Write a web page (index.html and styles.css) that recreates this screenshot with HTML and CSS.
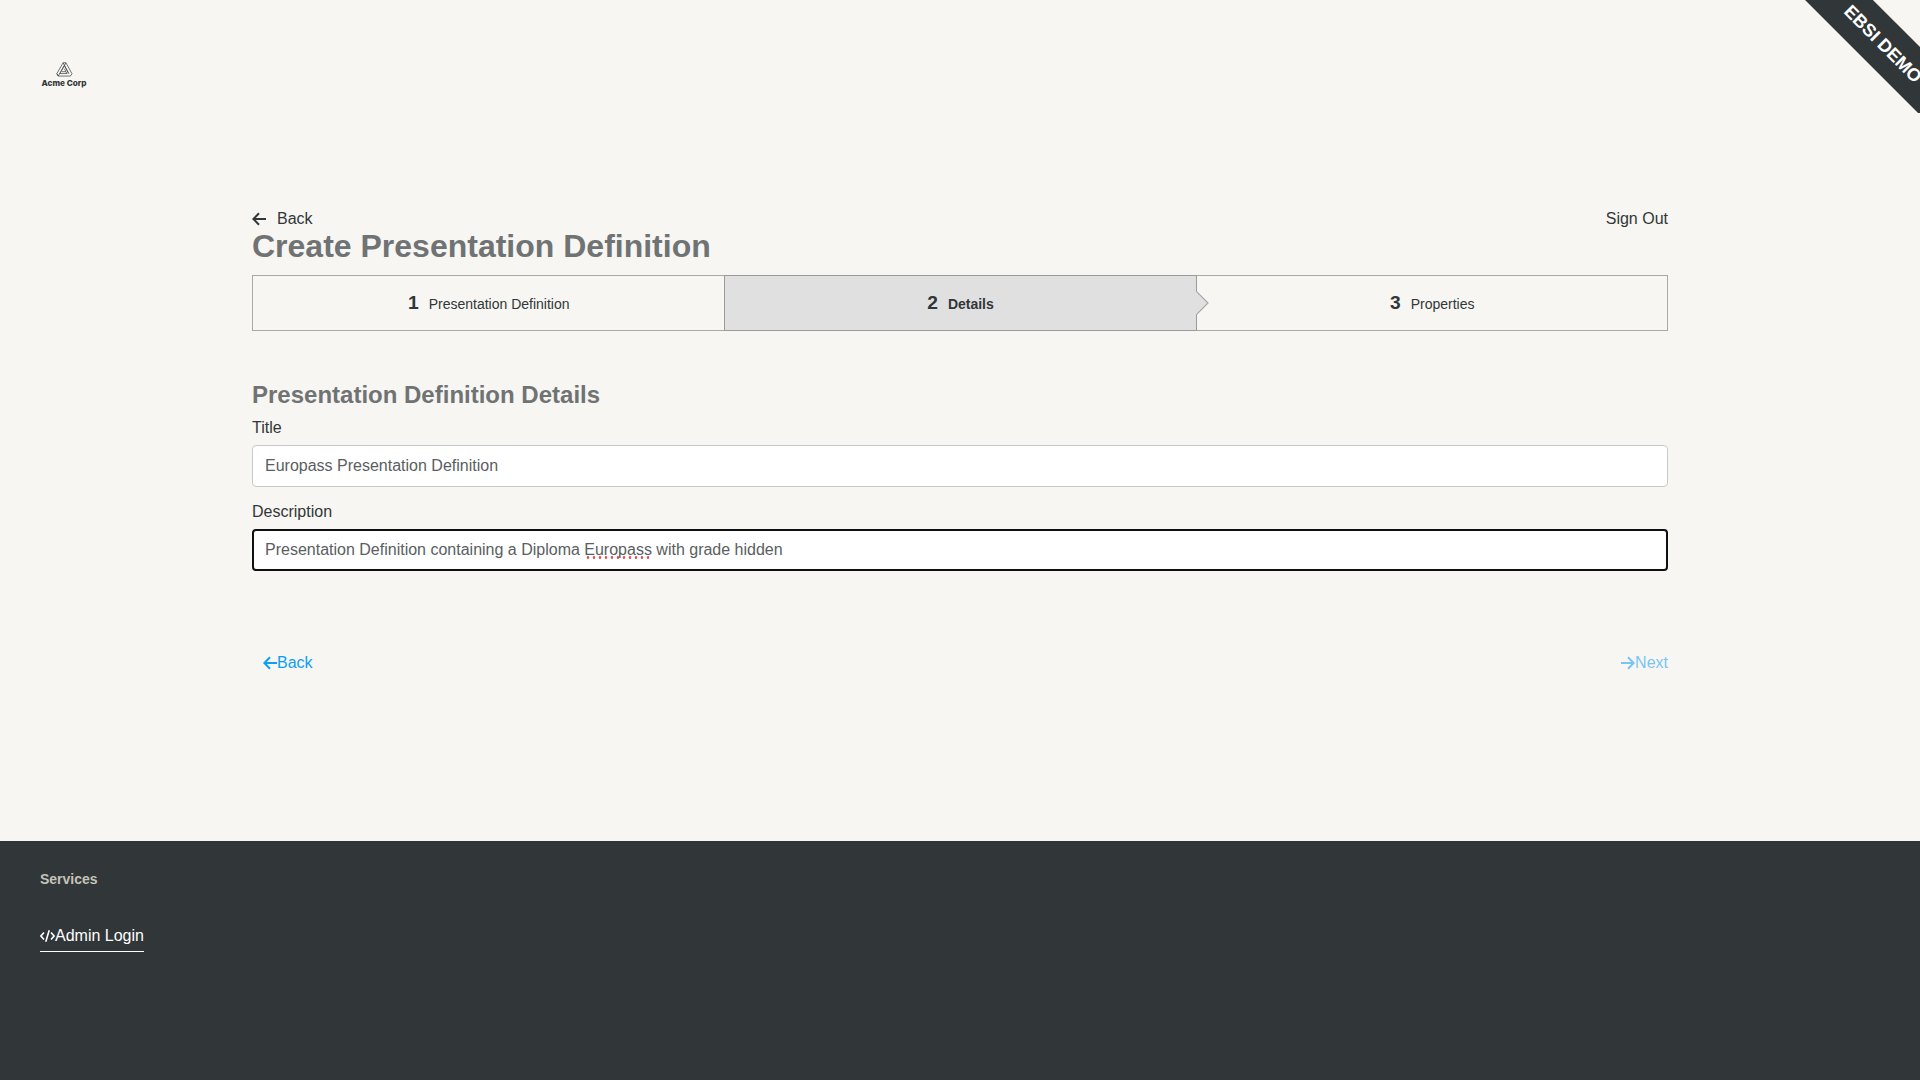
FILE: index.html
```html
<!DOCTYPE html>
<html lang="en">
<head>
<meta charset="utf-8">
<title>Create Presentation Definition</title>
<link rel="stylesheet" href="styles.css">
</head>
<body>
<header class="header">
  <a class="logo">
    <svg class="logo-mark" viewBox="0 0 18 16" fill="none" stroke="#44484a" stroke-width=".8" stroke-linejoin="round"><path d="M7.5.8h3L17 12.5 15.3 15H2.3L.8 12.4z"/><path d="M10.500.8 4.200 12.300h7.500M7.500.8l6.200 11.700M9 4.200 13.200 12M2.300 15 8.800 3.600M6.500 10.300h4L9 7.200M.8 12.400 2.300 15M11.700 12.300 10.500 10.300"/></svg>
    <span class="logo-name">Acme Corp</span>
  </a>
</header>
<div class="ribbon-area"><div class="ribbon">EBSI DEMO</div></div>
<main class="content">
  <nav class="topbar">
    <a class="back"><svg class="icon" viewBox="0 0 14 14"><path d="M7 1.300 1.300 7 7 12.700M1.500 7H14"/></svg>Back</a>
    <a>Sign Out</a>
  </nav>
  <h1 class="title">Create Presentation Definition</h1>
  <ol class="steps">
    <li class="step"><b class="number">1</b><span>Presentation Definition</span></li>
    <li class="step active"><b class="number">2</b><span>Details</span><svg class="chevron" viewBox="0 0 13 24"><path d="M0 0 12 12 0 24"/></svg></li>
    <li class="step"><b class="number">3</b><span>Properties</span></li>
  </ol>
  <h2 class="subtitle">Presentation Definition Details</h2>
  <div class="label">Title</div>
  <div class="field">Europass Presentation Definition</div>
  <div class="label">Description</div>
  <div class="field focused">Presentation Definition containing a Diploma&nbsp;<span class="misspelled">Europass</span>&nbsp;with grade hidden</div>
  <div class="actions">
    <a class="action"><svg class="icon" viewBox="0 0 14 14"><path d="M7 1.300 1.300 7 7 12.700M1.500 7H14"/></svg>Back</a>
    <a class="action disabled"><svg class="icon" viewBox="0 0 14 14"><path d="M7 1.300 12.700 7 7 12.700M12.500 7H0"/></svg>Next</a>
  </div>
</main>
<footer class="footer">
  <h3 class="footer-title">Services</h3>
  <a class="admin"><svg class="code" viewBox="0 0 15 12"><path d="M4 2.500.9 6 4 9.500M11 2.500 14.100 6 11 9.500M9.200.3 5.800 11.700"/></svg>Admin Login</a>
</footer>
</body>
</html>
```
FILE: styles.css
```css
* { box-sizing: border-box; }
body {
  margin: 0;
  height: 1080px;
  display: flex;
  flex-direction: column;
  overflow: hidden;
  background: #f7f6f2;
  color: #313638;
  font: 16px/24px "Liberation Sans", Arial, sans-serif;
}
.header { height: 207px; padding: 62px 40px 0; }
.logo { display: flex; flex-direction: column; align-items: center; width: 48px; }
.logo-mark { width: 17px; height: 15px; }
.logo-name { font: 800 8.200px/12px Inter, sans-serif; white-space: nowrap; }
.ribbon-area {
  position: absolute;
  top: 0;
  right: 0;
  width: 160px;
  height: 113px;
  overflow: hidden;
}
.ribbon {
  position: absolute;
  left: 3px;
  top: 20px;
  width: 240px;
  height: 48px;
  transform: rotate(45deg);
  background: #313638;
  color: #fff;
  font-size: 18px;
  font-weight: bold;
  line-height: 48px;
  text-align: center;
}
.content { width: 1416px; height: 634px; margin: 0 auto; }
.topbar { display: flex; justify-content: space-between; }
.back { display: flex; align-items: center; }
.icon { width: 14px; height: 14px; margin-bottom: 1px; fill: none; stroke: currentColor; stroke-width: 2; }
.back .icon { margin-right: 11px; }
.title { margin: -1px 0 13px; font-size: 32px; line-height: 32px; color: #6f7374; }
.steps { display: flex; height: 56px; margin: 0; padding: 0; list-style: none; border: 1px solid #a8a8a6; }
.step {
  flex: 1;
  display: flex;
  align-items: center;
  justify-content: center;
  gap: 10px;
  padding-left: 1px;
  font-size: 14px;
}
.number { font-size: 19.200px; }
.step span { padding-top: 2px; }
.active {
  position: relative;
  flex: 0 0 473px;
  margin: -1px 0;
  background: #e0e0e0;
  border: 1px solid #9b9b9b;
  font-weight: bold;
}
.chevron {
  position: absolute;
  right: -13px;
  top: 15px;
  width: 13px;
  height: 24px;
  fill: #e0e0e0;
  stroke: #a8a8a6;
  stroke-width: 1.200;
}
.subtitle { margin: 48px 0 5px; font-size: 24px; line-height: 32px; color: #6f7374; }
.label { margin-bottom: 5px; }
.field {
  display: flex;
  align-items: center;
  height: 42px;
  margin-bottom: 13px;
  padding: 0 12px 1px;
  border: 1px solid #c8c9c9;
  border-radius: 4px;
  background: #fff;
  color: #5a5e60;
}
.focused { border: 2px solid #101010; padding: 0 11px 1px; }
.misspelled {
  background: radial-gradient(circle, #f04545 1px, transparent 1.600px) 1px 18px / 6px 3px repeat-x;
}
.actions { display: flex; justify-content: space-between; margin-top: 80px; padding-left: 11px; }
.action { display: flex; align-items: center; color: #0d9ef8; }
.disabled { opacity: .55; }
.footer { flex: 1; padding: 28px 40px; background: #313638; color: #fff; }
.footer-title { margin: 0 0 28px; font-size: 14px; line-height: 20px; color: #c4c3b8; }
.admin { display: inline-flex; align-items: center; height: 35px; padding-top: 4px; border-bottom: 1px solid #fff; }
.code { width: 15px; height: 12px; fill: none; stroke: currentColor; stroke-width: 1.600; }
```
